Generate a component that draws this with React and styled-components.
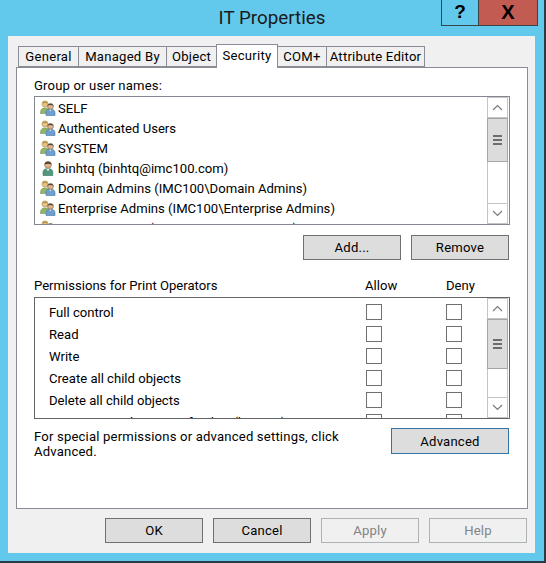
import React from 'react';
import styled, { createGlobalStyle } from 'styled-components';

const principals = [
  { name: 'SELF', kind: 'group' },
  { name: 'Authenticated Users', kind: 'group' },
  { name: 'SYSTEM', kind: 'group' },
  { name: 'binhtq (binhtq@imc100.com)', kind: 'user' },
  { name: 'Domain Admins (IMC100\\Domain Admins)', kind: 'group' },
  { name: 'Enterprise Admins (IMC100\\Enterprise Admins)', kind: 'group' },
  { name: 'Print Operators (IMC100\\Print Operators)', kind: 'group' },
];

const permissions = [
  'Full control',
  'Read',
  'Write',
  'Create all child objects',
  'Delete all child objects',
  'Generate resultant set of policy (logging)',
];

const tabs = [
  { label: 'General', width: 61 },
  { label: 'Managed By', width: 89 },
  { label: 'Object', width: 51 },
  { label: 'Security', width: 62, active: true },
  { label: 'COM+', width: 50 },
  { label: 'Attribute Editor', width: 99 },
];

const GroupIcon = () => (
  <svg width="16" height="16" viewBox="0 0 16 16">
    <path d="M0.5 13c0-3.2 1.5-5 3.5-5h2c2 0 3 1 3 3v2.5H0.5z" fill="#93b56a" stroke="#6f9150" strokeWidth="0.6" />
    <circle cx="5" cy="4" r="3.1" fill="#e2c48c" stroke="#b3924f" strokeWidth="0.6" />
    <path d="M2.2 3.6C2.6.6 7.4.6 7.8 3.6 6.2 2.7 3.8 2.7 2.2 3.6z" fill="#b9954a" />
    <path d="M6 15.5v-3c0-2 1.5-3.2 3.5-3.2h1.5c2.5 0 4 1.3 4 3.6v2.6z" fill="#6d9fd0" stroke="#46739f" strokeWidth="0.6" />
    <path d="M9.2 9.4l1.2 1.8 1.2-1.8z" fill="#f2f6fa" />
    <circle cx="10.5" cy="6.3" r="2.9" fill="#e0b48c" stroke="#6b5a42" strokeWidth="0.6" />
    <path d="M7.6 5.8c.3-2.8 5.5-2.9 5.8 0-1.7-1-4.1-1-5.8 0z" fill="#4d4536" />
  </svg>
);

const UserIcon = () => (
  <svg width="16" height="16" viewBox="0 0 16 16">
    <path d="M3 15.5v-3.2c0-2.2 1.7-3.6 3.6-3.6h2.6c2 0 3.6 1.4 3.6 3.6v3.2z" fill="#4f9a7e" stroke="#38755e" strokeWidth="0.6" />
    <path d="M6.4 8.8l1.6 2.4 1.6-2.4z" fill="#f1f5f2" />
    <circle cx="8" cy="4.8" r="3.4" fill="#e0b48c" stroke="#7a6244" strokeWidth="0.6" />
    <path d="M4.5 4.6C4.9.8 11.1.8 11.6 4.6 9.6 3.4 6.5 3.4 4.5 4.6z" fill="#473d2e" />
  </svg>
);

const Chevron = ({ up }) => (
  <svg width="11" height="7" viewBox="0 0 11 7">
    <path d={up ? 'M1 6l4.5-4.5L10 6' : 'M1 1l4.5 4.5L10 1'} fill="none" stroke="#7a7a7a" strokeWidth="1.2" />
  </svg>
);

const Scrollbar = ({ thumb }) => (
  <ScrollTrack>
    <ScrollArrow>
      <Chevron up />
    </ScrollArrow>
    <ScrollThumb $height={thumb}>
      <Grip />
      <Grip />
      <Grip />
    </ScrollThumb>
    <ScrollRest />
    <ScrollArrow>
      <Chevron />
    </ScrollArrow>
  </ScrollTrack>
);

export default function App() {
  return (
    <Dialog>
      <GlobalStyle />
      <TitleBar>
        <span />
        <Title>IT Properties</Title>
        <Controls>
          <HelpButton>?</HelpButton>
          <CloseButton>X</CloseButton>
        </Controls>
      </TitleBar>
      <Client>
        <TabStrip>
          {tabs.map((tab) => (
            <Tab key={tab.label} $width={tab.width} $active={tab.active}>
              {tab.label}
            </Tab>
          ))}
        </TabStrip>
        <Panel>
          <GroupLabel>Group or user names:</GroupLabel>
          <ListBox $height={129}>
            <Rows>
              {principals.map((p) => (
                <PrincipalRow key={p.name}>
                  {p.kind === 'group' ? <GroupIcon /> : <UserIcon />}
                  {p.name}
                </PrincipalRow>
              ))}
            </Rows>
            <Scrollbar thumb={44} />
          </ListBox>
          <ListActions>
            <Button>Add...</Button>
            <Button>Remove</Button>
          </ListActions>
          <PermissionHeader>
            <PermissionTitle>Permissions for Print Operators</PermissionTitle>
            <ColumnHead $width={81}>Allow</ColumnHead>
            <ColumnHead $width={64}>Deny</ColumnHead>
          </PermissionHeader>
          <ListBox $height={122} $dark>
            <PermissionRows>
              {permissions.map((name) => (
                <PermissionRow key={name}>
                  <PermissionName>{name}</PermissionName>
                  <CheckBox />
                  <CheckBox />
                </PermissionRow>
              ))}
            </PermissionRows>
            <Scrollbar thumb={50} />
          </ListBox>
          <AdvancedRow>
            <AdvancedNote>
              For special permissions or advanced settings, click Advanced.
            </AdvancedNote>
            <Button $primary>Advanced</Button>
          </AdvancedRow>
        </Panel>
        <Footer>
          <Button>OK</Button>
          <Button>Cancel</Button>
          <Button $disabled>Apply</Button>
          <Button $disabled>Help</Button>
        </Footer>
      </Client>
    </Dialog>
  );
}

const GlobalStyle = createGlobalStyle`
  html, body {
    margin: 0;
    padding: 0;
    background: #fff;
  }
  * {
    box-sizing: border-box;
  }
`;

const Dialog = styled.div`
  width: 546px;
  height: 563px;
  display: flex;
  flex-direction: column;
  background: #63c9ec;
  border-right: 2px solid #2b3a42;
  border-bottom: 2px solid #2b3a42;
  font-family: Roboto, 'Open Sans', sans-serif;
  font-size: 13.1px;
  color: #000;
  overflow: hidden;
`;

const TitleBar = styled.div`
  height: 36px;
  flex: none;
  display: grid;
  grid-template-columns: 1fr auto 1fr;
  align-items: start;
`;

const Title = styled.div`
  font-size: 18.8px;
  line-height: 36px;
  color: #1a1a1a;
`;

const Controls = styled.div`
  display: flex;
  justify-content: flex-end;
  padding-right: 6px;
`;

const HelpButton = styled.div`
  width: 37px;
  height: 26px;
  border: 1px solid #3a4348;
  border-top: none;
  border-right: none;
  font-family: 'Liberation Sans', sans-serif;
  font-weight: 700;
  font-size: 19px;
  line-height: 24px;
  text-align: center;
`;

const CloseButton = styled(HelpButton)`
  width: 60px;
  background: #c25b52;
  border-right: 1px solid #3a4348;
  font-size: 20px;
`;

const Client = styled.div`
  flex: 1;
  margin: 0 9px 8px 8px;
  padding: 8px 7px 0 8px;
  background: #f0f0f0;
  display: flex;
  flex-direction: column;
`;

const TabStrip = styled.div`
  height: 23px;
  flex: none;
  display: flex;
  align-items: flex-end;
  padding-left: 2px;
  position: relative;
  z-index: 1;
`;

const Tab = styled.div`
  width: ${({ $width }) => $width}px;
  height: ${({ $active }) => ($active ? 24 : 21)}px;
  margin-bottom: ${({ $active }) => ($active ? -1 : 0)}px;
  margin-right: -1px;
  background: ${({ $active }) => ($active ? '#fff' : '#f0f0f0')};
  border: 1px solid #898c95;
  border-bottom: ${({ $active }) => ($active ? 'none' : '1px solid #898c95')};
  position: relative;
  z-index: ${({ $active }) => ($active ? 1 : 0)};
  text-align: center;
  letter-spacing: 0.25px;
  line-height: ${({ $active }) => ($active ? 21 : 19)}px;
  white-space: nowrap;
`;

const Panel = styled.div`
  height: 442px;
  flex: none;
  background: #fff;
  border: 1px solid #898c95;
  padding: 8px 17px 0;
`;

const GroupLabel = styled.div`
  height: 20px;
  line-height: 19px;
  letter-spacing: 0.15px;
`;

const ListBox = styled.div`
  height: ${({ $height }) => $height}px;
  display: flex;
  background: #fff;
  border: 1px solid ${({ $dark }) => ($dark ? '#646464' : '#828790')};
  overflow: hidden;
`;

const Rows = styled.div`
  flex: 1;
  padding: 1px 0 0 5px;
  overflow: hidden;
`;

const PrincipalRow = styled.div`
  height: 20px;
  display: flex;
  align-items: center;
  gap: 2px;
  white-space: nowrap;
`;

const ScrollTrack = styled.div`
  width: 21px;
  flex: none;
  margin-right: 1px;
  display: flex;
  flex-direction: column;
`;

const ScrollArrow = styled.div`
  height: 21px;
  flex: none;
  display: flex;
  align-items: center;
  justify-content: center;
  background: #fff;
  border: 1px solid #c4c4c4;
`;

const ScrollThumb = styled.div`
  height: ${({ $height }) => $height}px;
  flex: none;
  display: flex;
  flex-direction: column;
  align-items: center;
  justify-content: center;
  gap: 2px;
  background: #dcdcdc;
  border: 1px solid #a6a6a6;
`;

const Grip = styled.div`
  width: 9px;
  height: 2px;
  background: #6e6e6e;
`;

const ScrollRest = styled.div`
  flex: 1;
  background: #fff;
  border-left: 1px solid #c4c4c4;
  border-right: 1px solid #c4c4c4;
`;

const ListActions = styled.div`
  display: flex;
  justify-content: flex-end;
  gap: 10px;
  margin-top: 10px;
  padding-right: 1px;
`;

const Button = styled.div`
  width: ${({ $primary }) => ($primary ? 118 : 98)}px;
  height: ${({ $primary }) => ($primary ? 26 : 25)}px;
  flex: none;
  display: flex;
  align-items: center;
  justify-content: center;
  letter-spacing: 0.2px;
  background: ${({ $disabled }) => ($disabled ? '#f0f0f0' : '#dddddd')};
  border: 1px solid
    ${({ $disabled, $primary }) =>
      $disabled ? '#adb2b5' : $primary ? '#2f74a8' : '#707070'};
  color: ${({ $disabled }) => ($disabled ? '#838383' : '#000')};
`;

const PermissionHeader = styled.div`
  height: 20px;
  margin-top: 15px;
  margin-bottom: 2px;
  display: flex;
  align-items: center;
`;

const PermissionTitle = styled.div`
  flex: 1;
`;

const ColumnHead = styled.div`
  width: ${({ $width }) => $width}px;
  flex: none;
`;

const PermissionRows = styled.div`
  flex: 1;
  padding: 3px 0 0 14px;
  overflow: hidden;
`;

const PermissionRow = styled.div`
  height: 22px;
  display: flex;
  align-items: center;
  padding-right: 25px;
`;

const PermissionName = styled.div`
  flex: 1;
  white-space: nowrap;
`;

const CheckBox = styled.div`
  width: 16px;
  height: 16px;
  flex: none;
  background: #fff;
  border: 1px solid #707070;
  & + & {
    margin-left: 64px;
  }
`;

const AdvancedRow = styled.div`
  margin-top: 9px;
  padding-right: 1px;
  display: flex;
  justify-content: space-between;
  align-items: flex-start;
`;

const AdvancedNote = styled.div`
  width: 320px;
  line-height: 15px;
  padding-top: 1px;
  letter-spacing: 0.18px;
`;

const Footer = styled.div`
  margin-top: 9px;
  padding-right: 1px;
  display: flex;
  justify-content: flex-end;
  gap: 10px;
`;
